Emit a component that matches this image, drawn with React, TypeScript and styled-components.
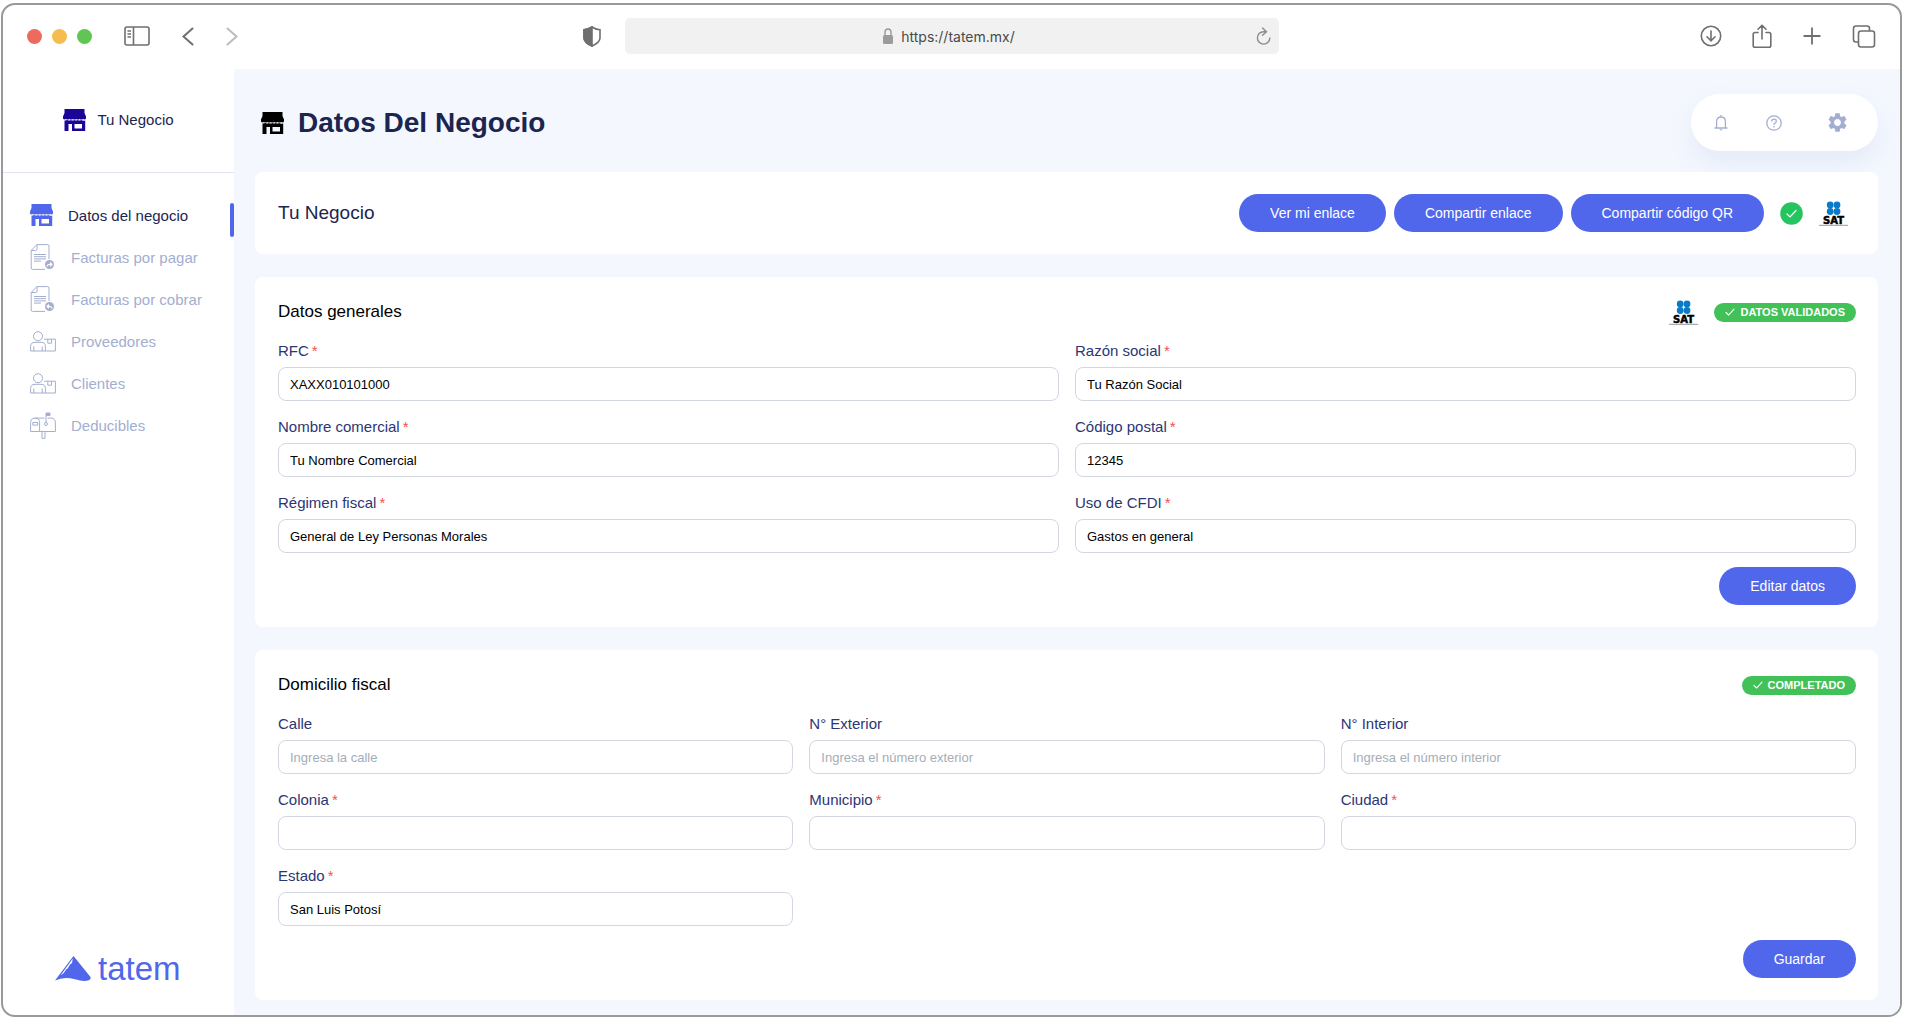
import React, { useId } from "react";
import styled, { createGlobalStyle } from "styled-components";

const c = {
  navy: "#1b2550",
  label: "#2b3674",
  blue: "#5067eb",
  muted: "#a3aed0",
  page: "#f4f7fe",
  green: "#43c159",
};

const GlobalStyle = createGlobalStyle`
  *, *::before, *::after { box-sizing: border-box; }
  body {
    margin: 0;
    background: #fff;
    font-family: "Liberation Sans", Arial, sans-serif;
    color: ${c.navy};
  }
  h1, h2, h3, p, ul { margin: 0; padding: 0; font-weight: 400; }
  button, input { font-family: inherit; }
  svg { display: block; flex: none; }
`;

const Page = styled.div`
  min-height: 100vh;
  padding: 3px 3px 2px 1px;
  display: flex;
`;
const Browser = styled.div`
  flex: 1;
  display: flex;
  flex-direction: column;
  border: 2px solid #999;
  border-radius: 14px;
  overflow: hidden;
`;
const Toolbar = styled.header`
  height: 64px;
  display: flex;
  align-items: center;
  justify-content: space-between;
  padding: 0 24px 2px;
  color: #6f6f6f;
`;
const Group = styled.div<{ $gap: number }>`
  display: flex;
  align-items: center;
  gap: ${(p) => p.$gap}px;
`;
const Side = styled(Group)<{ $end?: boolean }>`
  flex: 1;
  justify-content: ${(p) => (p.$end ? "flex-end" : "flex-start")};
`;
const Dot = styled.span<{ $color: string }>`
  width: 15px;
  height: 15px;
  border-radius: 50%;
  background: ${(p) => p.$color};
`;
const IconButton = styled.button<{ $color?: string }>`
  border: 0;
  padding: 0;
  background: none;
  color: ${(p) => p.$color ?? "inherit"};
  display: flex;
  align-items: center;
  justify-content: center;
`;
const Lead = styled.div`
  margin-left: 22px;
  display: flex;
  align-items: center;
  gap: 32px;
`;
const Shield = styled(IconButton)`
  margin-left: auto;
  margin-right: 24px;
`;
const Address = styled.div`
  width: 36%;
  max-width: 654px;
  height: 36px;
  display: flex;
  align-items: center;
  padding: 0 8px 0 18px;
  background: #f1f1f1;
  border-radius: 5px;
  color: #8c8c8c;
`;
const Url = styled.span`
  flex: 1;
  display: flex;
  align-items: center;
  justify-content: center;
  gap: 8px;
  font: 14px Inter, sans-serif;
  color: #4a4a4a;
`;

const Shell = styled.div`
  flex: 1;
  display: flex;
`;
const Sidebar = styled.aside`
  width: 231px;
  flex: none;
  display: flex;
  flex-direction: column;
`;
const Brand = styled.div`
  height: 104px;
  padding-bottom: 2px;
  display: flex;
  align-items: center;
  justify-content: center;
  gap: 11px;
  font-size: 15px;
  border-bottom: 1px solid #e0e4f1;
`;
const NavList = styled.ul`
  list-style: none;
  padding-top: 21px;
`;
const NavItem = styled.li<{ $active?: boolean }>`
  height: 42px;
  display: flex;
  align-items: center;
  position: relative;
  &::after {
    content: "";
    display: ${(p) => (p.$active ? "block" : "none")};
    position: absolute;
    right: 0;
    top: 9px;
    width: 4px;
    height: 34px;
    border-radius: 2px;
    background: ${c.blue};
  }
`;
const NavLink = styled.a<{ $active?: boolean }>`
  display: flex;
  align-items: center;
  gap: 15px;
  padding-left: 27px;
  font-size: 15px;
  text-decoration: none;
  white-space: nowrap;
  color: ${(p) => (p.$active ? c.navy : c.muted)};
  svg { color: ${(p) => (p.$active ? c.blue : c.muted)}; }
`;
const Logo = styled.div`
  margin-top: auto;
  padding: 0 0 26px 52px;
  display: flex;
  align-items: center;
  gap: 7px;
  font-size: 33px;
  line-height: 40px;
  color: ${c.blue};
`;

const Main = styled.main`
  flex: 1;
  min-width: 0;
  background: ${c.page};
  padding: 0 22px 14px 21px;
`;
const PageHead = styled.div`
  height: 103px;
  display: flex;
  align-items: center;
  justify-content: space-between;
  padding: 4px 0 0 6px;
`;
const Title = styled.h1`
  font-size: 28px;
  line-height: 36px;
  font-weight: 700;
`;
const Pill = styled.div`
  width: 187px;
  height: 57px;
  border-radius: 29px;
  background: #fff;
  box-shadow: 0 12px 24px rgba(112, 144, 200, 0.12);
  display: grid;
  grid-template-columns: 60px 46px 81px;
  color: ${c.muted};
`;
const Stack = styled.div`
  display: flex;
  flex-direction: column;
  gap: 23px;
`;
const Card = styled.section`
  background: #fff;
  border-radius: 8px;
  padding: 22px 22px 22px 23px;
`;
const Row = styled.div`
  display: flex;
  align-items: center;
  justify-content: space-between;
`;
const CardTitle = styled.h2`
  font-size: 19px;
  line-height: 24px;
`;
const Section = styled.h3`
  font-size: 17px;
  line-height: 24px;
  color: #000;
`;
const SectionHead = styled(Row)`
  height: 26px;
  margin-bottom: 16px;
`;
const Status = styled(Group)`
  padding-right: 8px;
`;
const Button = styled.button`
  height: 38px;
  padding: 0 31px;
  border: 0;
  border-radius: 19px;
  background: ${c.blue};
  color: #fff;
  font-size: 14px;
`;
const Badge = styled.span`
  height: 19px;
  padding: 0 11px;
  border-radius: 10px;
  background: ${c.green};
  color: #fff;
  display: flex;
  align-items: center;
  gap: 5px;
  font-size: 11px;
  font-weight: 700;
`;
const Fields = styled.div<{ $cols: number }>`
  display: grid;
  grid-template-columns: repeat(${(p) => p.$cols}, 1fr);
  gap: 16px;
`;
const FieldBox = styled.div`
  display: flex;
  flex-direction: column;
  gap: 6px;
`;
const Label = styled.label`
  font-size: 15px;
  line-height: 20px;
  color: ${c.label};
`;
const Req = styled.span`
  margin-left: 3px;
  color: #f5504f;
`;
const Input = styled.input`
  width: 100%;
  height: 34px;
  padding: 0 11px;
  border: 1px solid #d3d7e0;
  border-radius: 8px;
  background: #fff;
  color: #000;
  font-size: 13px;
  &::placeholder { color: #a5adb8; opacity: 1; }
`;
const Actions = styled.div`
  display: flex;
  justify-content: flex-end;
  margin-top: 14px;
`;
const SatName = styled.text`
  font: bold 10px "DejaVu Sans", sans-serif;
  fill: #000;
`;

type FieldProps = { label: string; required?: boolean; value?: string; placeholder?: string };
function Field({ label, required, value, placeholder }: FieldProps) {
  const id = useId();
  return (
    <FieldBox>
      <Label htmlFor={id}>
        {label}
        {required && <Req>*</Req>}
      </Label>
      <Input id={id} type="text" defaultValue={value} placeholder={placeholder} />
    </FieldBox>
  );
}

const Store = ({ color = "currentColor" }: { color?: string }) => (
  <svg width="23" height="22" viewBox="0 0 23 22" fill={color}>
    <path d="M1.500 0h20v4l1.500 3.500v2q-1 1.500-3 .500-1.700 1.200-3.400 0-1.700 1.200-3.400 0-1.700 1.200-3.400 0-1.700 1.200-3.400 0-1.700 1.200-3.400 0-2 1-3-.5v-2l1.500-3.500z" />
    <path fillRule="evenodd" d="M1.500 11.500q1.500.300 3-.4 1.700 1 3.400 0 1.700 1 3.400 0 1.700 1 3.400 0 1.700 1 3.400 0 1.700 1 4.100.4V22H9v-7H5.500v7h-4zM11.500 15v4.500h7.500V15z" />
  </svg>
);

const Invoice = ({ back }: { back?: boolean }) => (
  <svg width="26" height="26" viewBox="0 0 26 26" fill="none" stroke="currentColor" strokeWidth="1">
    <path d="M19 15V2q0-1.400-1.400-1.400H6.800L1.200 6.500V24q0 1.400 1.400 1.400H15M7 .6v4.500q0 1.400-1.400 1.400H1.200" />
    <path d="M4 10.500h12M4 12.700h12M4 14.900h12M4 17.100h7" />
    <circle cx="19.500" cy="20.500" r="4.500" fill="currentColor" stroke="none" />
    <path
      stroke="#fff"
      strokeWidth="1.200"
      d={back ? "M22 22.500q0-2.500-4.500-2M19 18.500l-2 2 2 1.800" : "M17 22.500q0-2.500 4.500-2M20 18.500l2 2-2 1.800"}
    />
  </svg>
);

const Person = () => (
  <svg width="26" height="21" viewBox="0 0 26 21" fill="none" stroke="currentColor" strokeWidth="1">
    <circle cx="8" cy="5.200" r="4.500" />
    <path d="M.6 20v-4.500q0-4.200 4.400-4.200h6q4.400 0 4.400 4.200V20zM3.800 20v-4.500M12.200 20v-4.500" />
    <path d="M14 8.200h11.400V20H15.400M17.800 8.200v4h3.700v-4" />
  </svg>
);

const Mailbox = () => (
  <svg width="26" height="27" viewBox="0 0 26 27" fill="none" stroke="currentColor" strokeWidth="1">
    <path d="M.6 19.500v-9q0-4.400 4.500-4.400t4.500 4.400v9zM5 6.100h9.500M17.500 6.100h3.300q4.600 0 4.600 4.600v8.800H9.600" />
    <path d="M2.800 10.500h5v2.600h-5zM12 19.500v6.800h3v-6.800" />
    <path d="M16 10.500V1h4v2.500h-4" fill="currentColor" />
    <circle cx="16" cy="12" r="1.500" />
  </svg>
);

const Check = () => (
  <svg width="10" height="10" viewBox="0 0 10 10" fill="none" stroke="#fff" strokeWidth="1.100" strokeLinecap="round">
    <path d="M1 5.500 3.600 8 9 2.200" />
  </svg>
);

const Verified = () => (
  <svg width="23" height="23" viewBox="0 0 23 23">
    <circle cx="11.500" cy="11.500" r="11.300" fill="#23c55e" />
    <path d="M7 12l3 3 6-6.500" fill="none" stroke="#fff" strokeWidth="1.200" strokeLinecap="round" />
  </svg>
);

const Sat = () => (
  <svg width="29" height="25" viewBox="0 0 29 25" role="img" aria-label="SAT">
    <g fill="#0a7bc9">
      <circle cx="11.200" cy="4" r="3.400" />
      <circle cx="18" cy="4" r="3.400" />
      <circle cx="11.200" cy="10.500" r="3.400" />
      <circle cx="18" cy="10.500" r="3.400" />
    </g>
    <SatName x="14.500" y="22.500" textAnchor="middle" stroke="#000" strokeWidth="0.500">SAT</SatName>
    <path d="M0 24.300h29" stroke="#999" strokeWidth="1" />
  </svg>
);

const Chevron = ({ right }: { right?: boolean }) => (
  <svg width="12" height="19" viewBox="0 0 12 19" fill="none" stroke="currentColor" strokeWidth="2" strokeLinecap="round">
    <path d={right ? "M1.500 1.500l9 8-9 8" : "M10.500 1.500l-9 8 9 8"} />
  </svg>
);

function BrowserBar() {
  return (
    <Toolbar>
      <Side $gap={10}>
        <Dot $color="#ee6a5f" />
        <Dot $color="#f5bd4f" />
        <Dot $color="#61c554" />
        <Lead>
          <IconButton aria-label="Barra lateral">
            <svg width="26" height="20" viewBox="0 0 26 20" fill="none" stroke="currentColor" strokeWidth="1.600">
              <rect x="1" y="1" width="24" height="18" rx="2" />
              <path d="M9.500 1v18M3.500 5h3.500M3.500 8h3.500M3.500 11h3.500" />
            </svg>
          </IconButton>
          <IconButton aria-label="Atrás"><Chevron /></IconButton>
          <IconButton aria-label="Adelante" $color="#bcbcbc"><Chevron right /></IconButton>
        </Lead>
        <Shield aria-label="Privacidad">
          <svg width="18" height="21" viewBox="0 0 18 21" fill="none" stroke="currentColor" strokeWidth="1.600">
            <path d="M9 1q3.500 2.500 8 2.700V12q0 4.500-8 8-8-3.500-8-8V3.700Q5.500 3.500 9 1z" />
            <path d="M9 1v19q-8-3.500-8-8V3.700Q5.500 3.500 9 1z" fill="currentColor" />
          </svg>
        </Shield>
      </Side>
      <Address>
        <Url>
          <svg width="10" height="16" viewBox="0 0 10 16">
            <rect y="7" width="10" height="9" rx="1.500" fill="#9b9b9b" />
            <path d="M2 7.500V4.200a3 3.200 0 0 1 6 0v3.300" fill="none" stroke="#9b9b9b" strokeWidth="1.400" />
          </svg>
          https://tatem.mx/
        </Url>
        <IconButton aria-label="Recargar">
          <svg width="15" height="18" viewBox="0 0 15 18" fill="none" stroke="currentColor" strokeWidth="1.400" strokeLinecap="round">
            <path d="M10 4.700H7.500a6.200 6.200 0 1 0 6.300 6.200M6.500 1l4 3.700-4 3.600" />
          </svg>
        </IconButton>
      </Address>
      <Side $gap={30} $end>
        <IconButton aria-label="Descargas">
          <svg width="22" height="22" viewBox="0 0 22 22" fill="none" stroke="currentColor" strokeWidth="1.600" strokeLinecap="round">
            <circle cx="11" cy="11" r="9.700" />
            <path d="M11 6v9.500M7 11.800l4 4 4-4" />
          </svg>
        </IconButton>
        <IconButton aria-label="Compartir">
          <svg width="20" height="25" viewBox="0 0 20 25" fill="none" stroke="currentColor" strokeWidth="1.600" strokeLinecap="round">
            <path d="M6 8.500H3q-1.800 0-1.800 1.800v11.200q0 1.800 1.800 1.800h14q1.800 0 1.800-1.800V10.300q0-1.800-1.800-1.800h-3M10 15V1.500M6 5.300l4-4 4 4" />
          </svg>
        </IconButton>
        <IconButton aria-label="Nueva pestaña">
          <svg width="20" height="20" viewBox="0 0 20 20" fill="none" stroke="currentColor" strokeWidth="1.800">
            <path d="M10 1.500v17M1.500 10h17" />
          </svg>
        </IconButton>
        <IconButton aria-label="Pestañas">
          <svg width="24" height="23" viewBox="0 0 24 23" fill="none" stroke="currentColor" strokeWidth="1.600">
            <rect x="6.500" y="6" width="16" height="16" rx="2.500" />
            <path d="M6.500 17H4q-2.500 0-2.500-2.500v-11Q1.500 1 4 1h11q2.500 0 2.500 2.500V6" />
          </svg>
        </IconButton>
      </Side>
    </Toolbar>
  );
}

const nav = [
  { text: "Facturas por pagar", icon: <Invoice /> },
  { text: "Facturas por cobrar", icon: <Invoice back /> },
  { text: "Proveedores", icon: <Person /> },
  { text: "Clientes", icon: <Person /> },
  { text: "Deducibles", icon: <Mailbox /> },
];

export default function App() {
  return (
    <Page>
      <GlobalStyle />
      <Browser>
        <BrowserBar />
        <Shell>
          <Sidebar>
            <Brand>
              <Store color="#1a0596" />
              Tu Negocio
            </Brand>
            <nav>
              <NavList>
                <NavItem $active>
                  <NavLink href="#negocio" $active>
                    <Store />
                    Datos del negocio
                  </NavLink>
                </NavItem>
                {nav.map((n) => (
                  <NavItem key={n.text}>
                    <NavLink href="#">
                      {n.icon}
                      {n.text}
                    </NavLink>
                  </NavItem>
                ))}
              </NavList>
            </nav>
            <Logo>
              <svg width="36" height="26" viewBox="0 0 36 26">
                <path d="M18.500 0 35.500 21q1 2.500-2.500 3.600-5 1.200-13-1.300Q9 20 0 24.500z" fill={c.blue} />
                <path d="M17.800 2.500 5.500 19.500q4-2.500 6-6.500l1.200-.5 2.300-4 2-1.500z" fill="#fff" />
              </svg>
              tatem
            </Logo>
          </Sidebar>
          <Main>
            <PageHead>
              <Group $gap={14}>
                <Store color="#000" />
                <Title>Datos Del Negocio</Title>
              </Group>
              <Pill>
                <IconButton aria-label="Notificaciones">
                  <svg width="14" height="16" viewBox="0 0 14 16" fill="none" stroke="currentColor" strokeWidth="1.300">
                    <path d="M.5 13h13M2.600 13V6.800Q2.600 2 7 2t4.400 4.800V13M7 0v2" />
                    <path d="M5.300 14.200h3.400L7 15.800z" fill="currentColor" stroke="none" />
                  </svg>
                </IconButton>
                <IconButton aria-label="Ayuda">
                  <svg width="16" height="16" viewBox="0 0 16 16" fill="none" stroke="currentColor" strokeWidth="1.300">
                    <circle cx="8" cy="8" r="7.200" />
                    <path d="M5.700 6.500q0-2.400 2.300-2.400t2.300 2.100q0 1-1.200 1.800T8 10M8 11v1.400" />
                  </svg>
                </IconButton>
                <IconButton aria-label="Configuración">
                  <svg width="23" height="23" viewBox="0 0 24 24" fill="currentColor">
                    <path d="M19.140 12.940c.04-.3.06-.61.06-.94 0-.32-.02-.64-.07-.94l2.030-1.580c.18-.14.23-.41.12-.61l-1.920-3.320c-.12-.22-.37-.29-.59-.22l-2.390.96c-.5-.38-1.030-.7-1.620-.94l-.36-2.540c-.04-.24-.24-.41-.48-.41h-3.840c-.24 0-.43.17-.47.41l-.36 2.540c-.59.24-1.130.57-1.620.94l-2.390-.96c-.22-.08-.47 0-.59.22L2.740 8.870c-.12.21-.08.47.12.61l2.030 1.580c-.05.3-.09.63-.09.94s.02.64.07.94l-2.030 1.580c-.18.14-.23.41-.12.61l1.920 3.320c.12.22.37.29.59.22l2.390-.96c.5.38 1.030.7 1.620.94l.36 2.540c.05.24.24.41.48.41h3.840c.24 0 .44-.17.47-.41l.36-2.540c.59-.24 1.130-.56 1.620-.94l2.390.96c.22.08.47 0 .59-.22l1.920-3.320c.12-.22.07-.47-.12-.61l-2.010-1.580zM12 15.600c-1.980 0-3.600-1.620-3.600-3.600s1.620-3.600 3.600-3.600 3.600 1.620 3.600 3.600-1.620 3.600-3.600 3.600z" />
                  </svg>
                </IconButton>
              </Pill>
            </PageHead>
            <Stack>
              <Card>
                <Row>
                  <CardTitle>Tu Negocio</CardTitle>
                  <Status $gap={16}>
                    <Group $gap={8}>
                      <Button>Ver mi enlace</Button>
                      <Button>Compartir enlace</Button>
                      <Button>Compartir código QR</Button>
                    </Group>
                    <Verified />
                    <Sat />
                  </Status>
                </Row>
              </Card>
              <Card>
                <SectionHead>
                  <Section>Datos generales</Section>
                  <Group $gap={16}>
                    <Sat />
                    <Badge><Check />DATOS VALIDADOS</Badge>
                  </Group>
                </SectionHead>
                <Fields $cols={2}>
                  <Field label="RFC" required value="XAXX010101000" />
                  <Field label="Razón social" required value="Tu Razón Social" />
                  <Field label="Nombre comercial" required value="Tu Nombre Comercial" />
                  <Field label="Código postal" required value="12345" />
                  <Field label="Régimen fiscal" required value="General de Ley Personas Morales" />
                  <Field label="Uso de CFDI" required value="Gastos en general" />
                </Fields>
                <Actions><Button>Editar datos</Button></Actions>
              </Card>
              <Card>
                <SectionHead>
                  <Section>Domicilio fiscal</Section>
                  <Badge><Check />COMPLETADO</Badge>
                </SectionHead>
                <Fields $cols={3}>
                  <Field label="Calle" placeholder="Ingresa la calle" />
                  <Field label="N° Exterior" placeholder="Ingresa el número exterior" />
                  <Field label="N° Interior" placeholder="Ingresa el número interior" />
                  <Field label="Colonia" required />
                  <Field label="Municipio" required />
                  <Field label="Ciudad" required />
                  <Field label="Estado" required value="San Luis Potosí" />
                </Fields>
                <Actions><Button>Guardar</Button></Actions>
              </Card>
            </Stack>
          </Main>
        </Shell>
      </Browser>
    </Page>
  );
}
